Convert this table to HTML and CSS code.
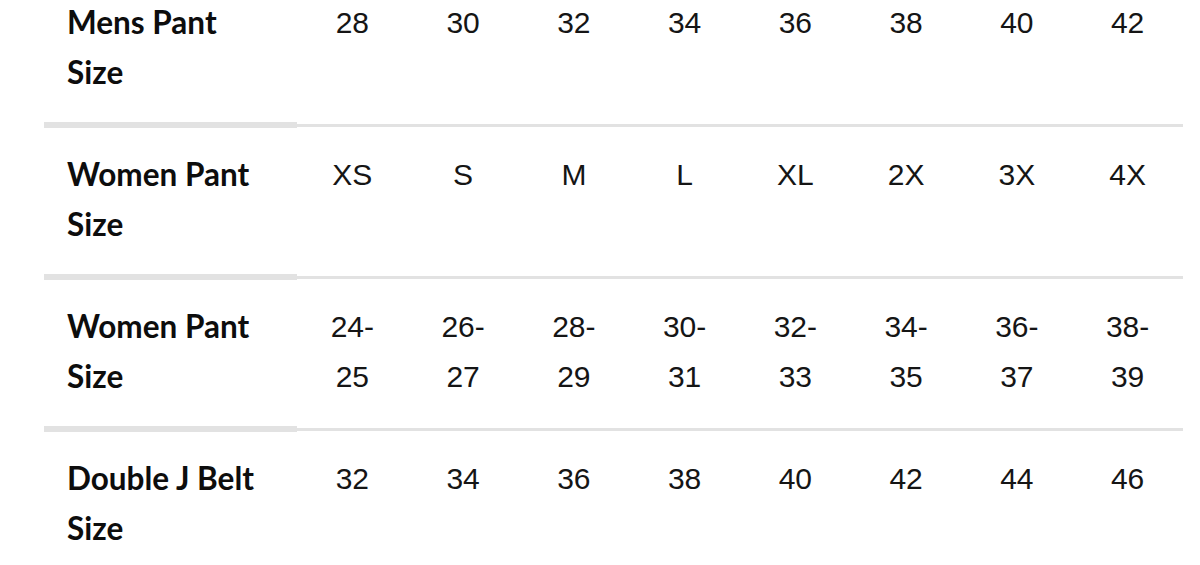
FILE: index.html
```html
<!DOCTYPE html>
<html lang="en">
<head>
<meta charset="utf-8">
<title>Size Chart</title>
<link rel="stylesheet" href="styles.css">
</head>
<body>
<table class="size-chart">
  <colgroup>
    <col class="col-label">
    <col span="8">
  </colgroup>
  <tbody>
    <tr>
      <th>Mens Pant Size</th>
      <td>28</td><td>30</td><td>32</td><td>34</td><td>36</td><td>38</td><td>40</td><td>42</td>
    </tr>
    <tr>
      <th>Women Pant Size</th>
      <td>XS</td><td>S</td><td>M</td><td>L</td><td>XL</td><td>2X</td><td>3X</td><td>4X</td>
    </tr>
    <tr>
      <th>Women Pant Size</th>
      <td>24-<br>25</td><td>26-<br>27</td><td>28-<br>29</td><td>30-<br>31</td><td>32-<br>33</td><td>34-<br>35</td><td>36-<br>37</td><td>38-<br>39</td>
    </tr>
    <tr>
      <th>Double J Belt Size</th>
      <td>32</td><td>34</td><td>36</td><td>38</td><td>40</td><td>42</td><td>44</td><td>46</td>
    </tr>
  </tbody>
</table>
</body>
</html>
```

FILE: styles.css
```css
html, body {
  margin: 0;
  padding: 0;
  background: #ffffff;
  overflow: hidden;
}

body {
  color: #111111;
}

.size-chart {
  border-collapse: collapse;
  table-layout: fixed;
  width: 1139px;
  margin: -30px 0 0 44px;
}

.col-label {
  width: 253px;
}

.size-chart th,
.size-chart td {
  vertical-align: top;
  line-height: 50px;
}

.size-chart th {
  font-family: Lato, "Noto Sans", sans-serif;
  font-size: 31.5px;
  font-weight: 700;
  text-align: left;
  padding: 21px 40px 25px 23px;
  color: #0d0d0d;
  border-top: 6px solid #e2e2e2;
}

.size-chart td {
  font-family: "Liberation Sans", Arial, sans-serif;
  font-size: 30px;
  font-weight: 400;
  text-align: center;
  padding: 23px 0 23px;
  color: #151515;
  border-top: 3px solid #e2e2e2;
}
```
